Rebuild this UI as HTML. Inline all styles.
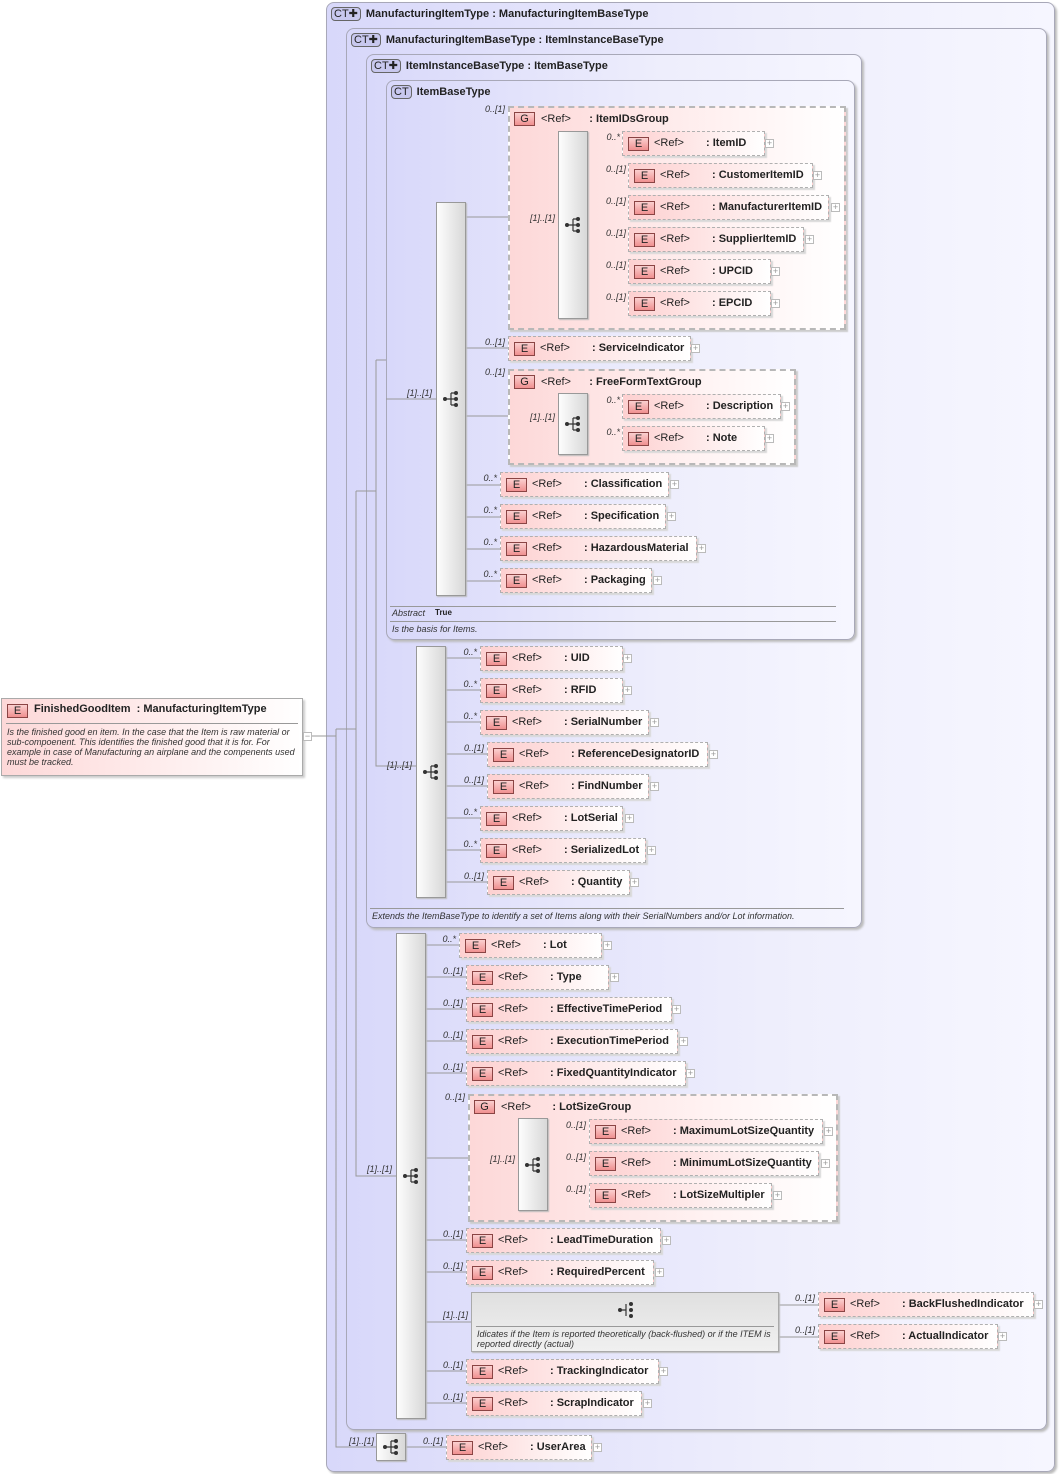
<!DOCTYPE html>
<html><head><meta charset="utf-8">
<style>
*{box-sizing:border-box;margin:0;padding:0}
body{width:1060px;height:1474px;position:relative;background:#fff;font-family:"Liberation Sans",sans-serif;color:#222;overflow:hidden}
.ct{position:absolute;border:1px solid #a8a8b8;border-radius:8px;background:linear-gradient(to right,#d8d8fa,#eeeefc 60%,#f6f6ff);box-shadow:2px 2px 2px #bbb}
.ctl{position:absolute;font:bold 11px "Liberation Sans",sans-serif;white-space:nowrap}
.ctb{display:inline-block;border:1px solid #666;border-radius:4px;background:#c8c8ee;font:11px "Liberation Sans",sans-serif;padding:0 2px;height:14px;line-height:12px;margin-right:5px;vertical-align:middle}
.e{position:absolute;height:25px;border:1px dashed #b0b0b0;background:linear-gradient(to right,#fdd0d0,#fff);box-shadow:2px 2px 1px #d8d8d8;font:bold 11px "Liberation Sans",sans-serif;white-space:nowrap}
.b{position:absolute;left:5px;top:5px;width:21px;height:14px;border:1px solid #8a4444;background:linear-gradient(#fbd0d0,#f09090);font:11px "Liberation Sans",sans-serif;text-align:center;line-height:13px;color:#222}
.r{position:absolute;left:31px;top:5px;font-weight:normal}
.n{position:absolute;left:83px;top:5px}
.x{position:absolute;width:9px;height:9px;border:1px solid #bbb;background:#fff;font:9px/7px "Liberation Sans";text-align:center;color:#999}
.c{position:absolute;font:italic 9px "Liberation Sans",sans-serif;color:#333;white-space:nowrap;text-align:right}
.s{position:absolute;border:1px solid #999;background:linear-gradient(to right,#fdfdfd,#d8d8d8);box-shadow:1px 1px 1px #bbb}
.s svg{position:absolute;left:50%;top:50%;margin-left:-9px;margin-top:-9px}
.g{position:absolute;border:2px dashed #b8b8b8;background:linear-gradient(to right,#fdd8d8,#fff4f4 70%,#fff);box-shadow:2px 2px 1px #ccc}
.gl{position:absolute;left:4px;top:4px;font:bold 11px "Liberation Sans",sans-serif;white-space:nowrap}
.gl .b{position:static;display:inline-block;margin-right:6px;vertical-align:middle}
.gl i{font-style:normal;font-weight:normal}
.d{position:absolute;font:italic 9px "Liberation Sans",sans-serif;color:#333}
.ln{position:absolute;height:1px;background:#999}
</style></head><body>

<svg width="0" height="0" style="position:absolute"><defs><g id="sq"><circle cx="3" cy="9" r="2" fill="#333"/><path d="M3 9H9M9 3V15M9 3H14M9 9H14M9 15H14" stroke="#333" stroke-width="1.2" fill="none"/><circle cx="14" cy="3" r="2" fill="#333"/><circle cx="14" cy="9" r="2" fill="#333"/><circle cx="14" cy="15" r="2" fill="#333"/></g></defs></svg>

<div style="position:absolute;left:1px;top:698px;width:302px;height:78px;border:1px solid #aaa;background:linear-gradient(to right,#fdd8d8,#fff);box-shadow:2px 2px 2px #ccc">
 <div class="b" style="left:5px;top:5px">E</div>
 <div style="position:absolute;left:32px;top:4px;font:bold 11px 'Liberation Sans',sans-serif">FinishedGoodItem &nbsp;: ManufacturingItemType</div>
 <div style="position:absolute;left:4px;right:4px;top:24px;border-top:1px solid #999"></div>
 <div class="d" style="left:5px;top:28px;width:295px;line-height:10px">Is the finished good en item. In the case that the Item is raw material or sub-compoenent. This identifies the finished good that it is for. For example in case of Manufacturing an airplane and the compenents used must be tracked.</div>
</div>
<div class="x" style="left:303px;top:732px">−</div>

<div class="ct" style="left:326px;top:2px;width:729px;height:1470px"></div>
<div class="ctl" style="left:331px;top:7px"><span class="ctb">CT✚</span>ManufacturingItemType : ManufacturingItemBaseType</div>
<div class="ct" style="left:346px;top:28px;width:701px;height:1402px"></div>
<div class="ctl" style="left:351px;top:33px"><span class="ctb">CT✚</span>ManufacturingItemBaseType : ItemInstanceBaseType</div>
<div class="ct" style="left:366px;top:54px;width:496px;height:874px"></div>
<div class="ctl" style="left:371px;top:59px"><span class="ctb">CT✚</span>ItemInstanceBaseType : ItemBaseType</div>
<div class="ct" style="left:386px;top:80px;width:469px;height:560px"></div>
<div class="ctl" style="left:391px;top:85px"><span class="ctb">CT</span>ItemBaseType</div>

<svg style="position:absolute;left:0;top:0" width="1060" height="1474"><g stroke="#999" fill="none" stroke-width="1">
<path d="M312 736H336M336 729H356M336 729V1447H376M356 491V1176H396M356 491H376M376 360V766H416M376 360H386M386 399H436"/>
<path d="M465 217H508M508 225H558M588 142H622M588 174H628M588 206H628M588 238H628M588 270H628M588 302H628"/>
<path d="M465 348H508M465 416H508M508 416H558M588 406H622M588 438H622M465 485H500M465 517H500M465 549H500M465 581H500"/>
<path d="M446 658H480M446 690H480M446 722H480M446 754H487M446 786H487M446 818H480M446 850H480M446 882H487"/>
<path d="M426 945H459M426 977H466M426 1009H466M426 1041H466M426 1073H466M426 1158H468M468 1158H518M548 1131H589M548 1163H589M548 1195H589M426 1240H466M426 1272H466M426 1322H471M778 1305H818M778 1337H818M426 1371H466M426 1403H466M405 1447H446"/>
</g></svg>

<div class="s" style="left:436px;top:202px;width:30px;height:394px"><svg width="18" height="18"><use href="#sq"/></svg></div>
<div class="c" style="left:380px;top:388px;width:52px">[1]..[1]</div>

<div class="c" style="left:460px;top:104px;width:45px">0..[1]</div>
<div class="g" style="left:508px;top:106px;width:338px;height:224px"><div class="gl"><span class="b">G</span><i>&lt;Ref&gt;</i> &nbsp; &nbsp; &nbsp;: ItemIDsGroup</div></div>
<div class="s" style="left:558px;top:131px;width:30px;height:188px"><svg width="18" height="18"><use href="#sq"/></svg></div>
<div class="c" style="left:510px;top:213px;width:45px">[1]..[1]</div>

<div class="c" style="left:580px;top:132px;width:40px">0..*</div>
<div class="e" style="left:622px;top:131px;width:143px"><div class="b">E</div><span class="r">&lt;Ref&gt;</span><span class="n">: ItemID</span></div><div class="x" style="left:765px;top:139px">+</div>
<div class="c" style="left:580px;top:164px;width:46px">0..[1]</div>
<div class="e" style="left:628px;top:163px;width:185px"><div class="b">E</div><span class="r">&lt;Ref&gt;</span><span class="n">: CustomerItemID</span></div><div class="x" style="left:813px;top:171px">+</div>
<div class="c" style="left:580px;top:196px;width:46px">0..[1]</div>
<div class="e" style="left:628px;top:195px;width:201px"><div class="b">E</div><span class="r">&lt;Ref&gt;</span><span class="n">: ManufacturerItemID</span></div><div class="x" style="left:831px;top:203px">+</div>
<div class="c" style="left:580px;top:228px;width:46px">0..[1]</div>
<div class="e" style="left:628px;top:227px;width:176px"><div class="b">E</div><span class="r">&lt;Ref&gt;</span><span class="n">: SupplierItemID</span></div><div class="x" style="left:805px;top:235px">+</div>
<div class="c" style="left:580px;top:260px;width:46px">0..[1]</div>
<div class="e" style="left:628px;top:259px;width:143px"><div class="b">E</div><span class="r">&lt;Ref&gt;</span><span class="n">: UPCID</span></div><div class="x" style="left:771px;top:267px">+</div>
<div class="c" style="left:580px;top:292px;width:46px">0..[1]</div>
<div class="e" style="left:628px;top:291px;width:143px"><div class="b">E</div><span class="r">&lt;Ref&gt;</span><span class="n">: EPCID</span></div><div class="x" style="left:771px;top:299px">+</div>

<div class="c" style="left:460px;top:337px;width:45px">0..[1]</div>
<div class="e" style="left:508px;top:336px;width:183px"><div class="b">E</div><span class="r">&lt;Ref&gt;</span><span class="n">: ServiceIndicator</span></div><div class="x" style="left:691px;top:344px">+</div>

<div class="c" style="left:460px;top:367px;width:45px">0..[1]</div>
<div class="g" style="left:508px;top:369px;width:288px;height:96px"><div class="gl"><span class="b">G</span><i>&lt;Ref&gt;</i> &nbsp; &nbsp; &nbsp;: FreeFormTextGroup</div></div>
<div class="s" style="left:558px;top:393px;width:30px;height:62px"><svg width="18" height="18"><use href="#sq"/></svg></div>
<div class="c" style="left:510px;top:412px;width:45px">[1]..[1]</div>
<div class="c" style="left:580px;top:395px;width:40px">0..*</div>
<div class="e" style="left:622px;top:394px;width:159px"><div class="b">E</div><span class="r">&lt;Ref&gt;</span><span class="n">: Description</span></div><div class="x" style="left:781px;top:402px">+</div>
<div class="c" style="left:580px;top:427px;width:40px">0..*</div>
<div class="e" style="left:622px;top:426px;width:143px"><div class="b">E</div><span class="r">&lt;Ref&gt;</span><span class="n">: Note</span></div><div class="x" style="left:765px;top:434px">+</div>

<div class="c" style="left:460px;top:473px;width:37px">0..*</div>
<div class="e" style="left:500px;top:472px;width:169px"><div class="b">E</div><span class="r">&lt;Ref&gt;</span><span class="n">: Classification</span></div><div class="x" style="left:670px;top:480px">+</div>
<div class="c" style="left:460px;top:505px;width:37px">0..*</div>
<div class="e" style="left:500px;top:504px;width:166px"><div class="b">E</div><span class="r">&lt;Ref&gt;</span><span class="n">: Specification</span></div><div class="x" style="left:667px;top:512px">+</div>
<div class="c" style="left:460px;top:537px;width:37px">0..*</div>
<div class="e" style="left:500px;top:536px;width:197px"><div class="b">E</div><span class="r">&lt;Ref&gt;</span><span class="n">: HazardousMaterial</span></div><div class="x" style="left:697px;top:544px">+</div>
<div class="c" style="left:460px;top:569px;width:37px">0..*</div>
<div class="e" style="left:500px;top:568px;width:152px"><div class="b">E</div><span class="r">&lt;Ref&gt;</span><span class="n">: Packaging</span></div><div class="x" style="left:653px;top:576px">+</div>

<div class="ln" style="left:390px;top:606px;width:446px"></div>
<div class="d" style="left:392px;top:608px">Abstract</div>
<div style="position:absolute;left:435px;top:608px;font:bold 8px 'Liberation Sans';">True</div>
<div class="ln" style="left:390px;top:621px;width:446px"></div>
<div class="d" style="left:392px;top:624px">Is the basis for Items.</div>

<div class="s" style="left:416px;top:646px;width:30px;height:252px"><svg width="18" height="18"><use href="#sq"/></svg></div>
<div class="c" style="left:370px;top:760px;width:42px">[1]..[1]</div>
<div class="c" style="left:440px;top:647px;width:37px">0..*</div>
<div class="e" style="left:480px;top:646px;width:143px"><div class="b">E</div><span class="r">&lt;Ref&gt;</span><span class="n">: UID</span></div><div class="x" style="left:623px;top:654px">+</div>
<div class="c" style="left:440px;top:679px;width:37px">0..*</div>
<div class="e" style="left:480px;top:678px;width:143px"><div class="b">E</div><span class="r">&lt;Ref&gt;</span><span class="n">: RFID</span></div><div class="x" style="left:623px;top:686px">+</div>
<div class="c" style="left:440px;top:711px;width:37px">0..*</div>
<div class="e" style="left:480px;top:710px;width:169px"><div class="b">E</div><span class="r">&lt;Ref&gt;</span><span class="n">: SerialNumber</span></div><div class="x" style="left:650px;top:718px">+</div>
<div class="c" style="left:440px;top:743px;width:44px">0..[1]</div>
<div class="e" style="left:487px;top:742px;width:221px"><div class="b">E</div><span class="r">&lt;Ref&gt;</span><span class="n">: ReferenceDesignatorID</span></div><div class="x" style="left:709px;top:750px">+</div>
<div class="c" style="left:440px;top:775px;width:44px">0..[1]</div>
<div class="e" style="left:487px;top:774px;width:162px"><div class="b">E</div><span class="r">&lt;Ref&gt;</span><span class="n">: FindNumber</span></div><div class="x" style="left:650px;top:782px">+</div>
<div class="c" style="left:440px;top:807px;width:37px">0..*</div>
<div class="e" style="left:480px;top:806px;width:143px"><div class="b">E</div><span class="r">&lt;Ref&gt;</span><span class="n">: LotSerial</span></div><div class="x" style="left:625px;top:814px">+</div>
<div class="c" style="left:440px;top:839px;width:37px">0..*</div>
<div class="e" style="left:480px;top:838px;width:166px"><div class="b">E</div><span class="r">&lt;Ref&gt;</span><span class="n">: SerializedLot</span></div><div class="x" style="left:647px;top:846px">+</div>
<div class="c" style="left:440px;top:871px;width:44px">0..[1]</div>
<div class="e" style="left:487px;top:870px;width:143px"><div class="b">E</div><span class="r">&lt;Ref&gt;</span><span class="n">: Quantity</span></div><div class="x" style="left:630px;top:878px">+</div>
<div class="ln" style="left:370px;top:908px;width:474px"></div>
<div class="d" style="left:372px;top:911px">Extends the ItemBaseType to identify a set of Items along with their SerialNumbers and/or Lot information.</div>

<div class="s" style="left:396px;top:933px;width:30px;height:486px"><svg width="18" height="18"><use href="#sq"/></svg></div>
<div class="c" style="left:350px;top:1164px;width:42px">[1]..[1]</div>
<div class="c" style="left:420px;top:934px;width:36px">0..*</div>
<div class="e" style="left:459px;top:933px;width:143px"><div class="b">E</div><span class="r">&lt;Ref&gt;</span><span class="n">: Lot</span></div><div class="x" style="left:603px;top:941px">+</div>
<div class="c" style="left:420px;top:966px;width:43px">0..[1]</div>
<div class="e" style="left:466px;top:965px;width:143px"><div class="b">E</div><span class="r">&lt;Ref&gt;</span><span class="n">: Type</span></div><div class="x" style="left:610px;top:973px">+</div>
<div class="c" style="left:420px;top:998px;width:43px">0..[1]</div>
<div class="e" style="left:466px;top:997px;width:206px"><div class="b">E</div><span class="r">&lt;Ref&gt;</span><span class="n">: EffectiveTimePeriod</span></div><div class="x" style="left:672px;top:1005px">+</div>
<div class="c" style="left:420px;top:1030px;width:43px">0..[1]</div>
<div class="e" style="left:466px;top:1029px;width:212px"><div class="b">E</div><span class="r">&lt;Ref&gt;</span><span class="n">: ExecutionTimePeriod</span></div><div class="x" style="left:679px;top:1037px">+</div>
<div class="c" style="left:420px;top:1062px;width:43px">0..[1]</div>
<div class="e" style="left:466px;top:1061px;width:220px"><div class="b">E</div><span class="r">&lt;Ref&gt;</span><span class="n">: FixedQuantityIndicator</span></div><div class="x" style="left:686px;top:1069px">+</div>

<div class="c" style="left:420px;top:1092px;width:45px">0..[1]</div>
<div class="g" style="left:468px;top:1094px;width:370px;height:128px"><div class="gl"><span class="b">G</span><i>&lt;Ref&gt;</i> &nbsp; &nbsp; &nbsp; : LotSizeGroup</div></div>
<div class="s" style="left:518px;top:1118px;width:30px;height:93px"><svg width="18" height="18"><use href="#sq"/></svg></div>
<div class="c" style="left:470px;top:1154px;width:45px">[1]..[1]</div>
<div class="c" style="left:550px;top:1120px;width:36px">0..[1]</div>
<div class="e" style="left:589px;top:1119px;width:234px"><div class="b">E</div><span class="r">&lt;Ref&gt;</span><span class="n">: MaximumLotSizeQuantity</span></div><div class="x" style="left:824px;top:1127px">+</div>
<div class="c" style="left:550px;top:1152px;width:36px">0..[1]</div>
<div class="e" style="left:589px;top:1151px;width:230px"><div class="b">E</div><span class="r">&lt;Ref&gt;</span><span class="n">: MinimumLotSizeQuantity</span></div><div class="x" style="left:821px;top:1159px">+</div>
<div class="c" style="left:550px;top:1184px;width:36px">0..[1]</div>
<div class="e" style="left:589px;top:1183px;width:183px"><div class="b">E</div><span class="r">&lt;Ref&gt;</span><span class="n">: LotSizeMultipler</span></div><div class="x" style="left:773px;top:1191px">+</div>

<div class="c" style="left:420px;top:1229px;width:43px">0..[1]</div>
<div class="e" style="left:466px;top:1228px;width:195px"><div class="b">E</div><span class="r">&lt;Ref&gt;</span><span class="n">: LeadTimeDuration</span></div><div class="x" style="left:662px;top:1236px">+</div>
<div class="c" style="left:420px;top:1261px;width:43px">0..[1]</div>
<div class="e" style="left:466px;top:1260px;width:188px"><div class="b">E</div><span class="r">&lt;Ref&gt;</span><span class="n">: RequiredPercent</span></div><div class="x" style="left:655px;top:1268px">+</div>

<div class="c" style="left:420px;top:1310px;width:48px">[1]..[1]</div>
<div style="position:absolute;left:471px;top:1292px;width:308px;height:60px;border:1px solid #aaa;background:linear-gradient(#e0e0e0,#f0f0f0);box-shadow:1px 1px 1px #bbb">
 <svg width="18" height="18" style="position:absolute;left:145px;top:8px"><circle cx="3" cy="9" r="2" fill="#333"/><path d="M3 9H9M9 3V15" stroke="#333" stroke-width="1.2"/><circle cx="14" cy="3" r="2" fill="#333"/><circle cx="14" cy="9" r="2" fill="#333"/><circle cx="14" cy="15" r="2" fill="#333"/></svg>
 <div class="ln" style="left:4px;top:33px;width:298px"></div>
 <div class="d" style="left:5px;top:36px;width:300px;line-height:10px">Idicates if the Item is reported theoretically (back-flushed) or if the ITEM is reported directly (actual)</div>
</div>
<div class="c" style="left:780px;top:1293px;width:35px">0..[1]</div>
<div class="e" style="left:818px;top:1292px;width:216px"><div class="b">E</div><span class="r">&lt;Ref&gt;</span><span class="n">: BackFlushedIndicator</span></div><div class="x" style="left:1034px;top:1300px">+</div>
<div class="c" style="left:780px;top:1325px;width:35px">0..[1]</div>
<div class="e" style="left:818px;top:1324px;width:180px"><div class="b">E</div><span class="r">&lt;Ref&gt;</span><span class="n">: ActualIndicator</span></div><div class="x" style="left:998px;top:1332px">+</div>

<div class="c" style="left:420px;top:1360px;width:43px">0..[1]</div>
<div class="e" style="left:466px;top:1359px;width:193px"><div class="b">E</div><span class="r">&lt;Ref&gt;</span><span class="n">: TrackingIndicator</span></div><div class="x" style="left:659px;top:1367px">+</div>
<div class="c" style="left:420px;top:1392px;width:43px">0..[1]</div>
<div class="e" style="left:466px;top:1391px;width:176px"><div class="b">E</div><span class="r">&lt;Ref&gt;</span><span class="n">: ScrapIndicator</span></div><div class="x" style="left:643px;top:1399px">+</div>

<div class="c" style="left:336px;top:1436px;width:38px">[1]..[1]</div>
<div class="s" style="left:376px;top:1433px;width:30px;height:28px"><svg width="18" height="18"><use href="#sq"/></svg></div>
<div class="c" style="left:405px;top:1436px;width:38px">0..[1]</div>
<div class="e" style="left:446px;top:1435px;width:146px"><div class="b">E</div><span class="r">&lt;Ref&gt;</span><span class="n">: UserArea</span></div><div class="x" style="left:593px;top:1443px">+</div>

</body></html>
